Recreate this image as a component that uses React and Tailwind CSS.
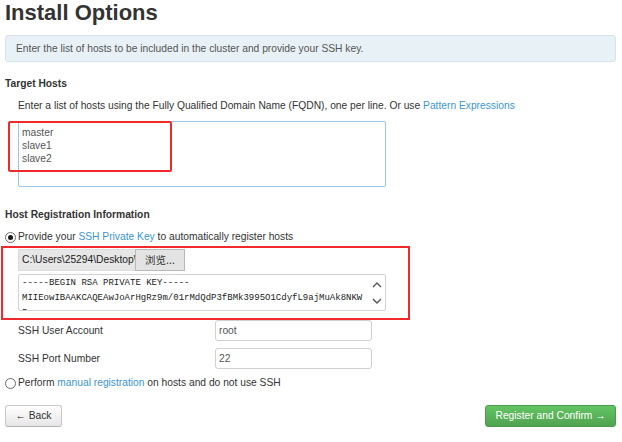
import React from "react";

function Radio({ checked }) {
  return (
    <span className="flex h-[11px] w-[11px] shrink-0 items-center justify-center rounded-full border border-[#6b6b6b] bg-white">
      {checked && <span className="h-[5px] w-[5px] rounded-full bg-[#1a1a1a]"></span>}
    </span>
  );
}

function Field({ label, value }) {
  return (
    <div className="flex items-center pl-[13px]">
      <span className="w-[197px] text-[#333]">{label}</span>
      <div className="flex h-[21px] w-[157px] items-center rounded-[3px] border border-[#d0d0d0] pl-[3px] text-[#555]">
        {value}
      </div>
    </div>
  );
}

export default function App() {
  return (
    <div className="h-[442px] w-[622px] overflow-hidden bg-white pl-[5px] pr-[6px] font-['Liberation_Sans',Arial,sans-serif] text-[10.25px] leading-[16px] text-[#333]">
      <h2 className="text-[22px] font-bold leading-[25px] text-[#333]">Install Options</h2>

      <div className="mt-[10px] flex h-[27px] items-center rounded-[3px] border border-[#d5e4ec] bg-[#e8f1f6] pl-[10px] text-[#555]">
        Enter the list of hosts to be included in the cluster and provide your SSH key.
      </div>

      <div className="mt-[14px] font-bold">Target Hosts</div>
      <div className="mt-[6px] pl-[13px]">
        Enter a list of hosts using the Fully Qualified Domain Name (FQDN), one per line. Or use{" "}
        <span className="text-[#3b95d2]">Pattern Expressions</span>
      </div>

      <div className="relative mt-[7px] ml-[13px] h-[66px] w-[368px] rounded-[2px] border border-[#9cc6ea] pl-[3px] pt-[4px] leading-[13px] text-[#555]">
        <div>master</div>
        <div>slave1</div>
        <div>slave2</div>
        <div className="absolute left-[-11px] top-[-1px] h-[51px] w-[164px] rounded-[2px] border-2 border-[#f02a2a]"></div>
      </div>

      <div className="mt-[20px] font-bold">Host Registration Information</div>
      <div className="mt-[6px] flex items-center gap-[2px]">
        <Radio checked />
        <span>
          Provide your <span className="text-[#3b95d2]">SSH Private Key</span> to automatically register hosts
        </span>
      </div>

      <div className="relative mt-[4px] ml-[13px] w-[368px]">
        <div className="flex h-[22px] w-[167px]">
          <div className="flex w-[117px] items-center overflow-hidden whitespace-nowrap border border-r-0 border-[#dcdcdc] bg-[#e6e6e6] pl-[3px] text-[#222]">
            C:\Users\25294\Desktop\
          </div>
          <div className="flex w-[50px] items-center justify-center border border-[#b9b9b9] bg-[#e3e3e3] font-['Noto_Sans_CJK_SC',sans-serif] text-[10.5px] text-[#333]">
            浏览...
          </div>
        </div>

        <div className="mt-[3px] flex h-[37px] w-[368px] overflow-hidden rounded-[2px] border border-[#d3d3d3]">
          <div className="flex-1 overflow-hidden whitespace-pre pl-[3px] pt-[1px] font-['Liberation_Mono',monospace] text-[9px] leading-[15px] text-[#222]">
            <div>-----BEGIN RSA PRIVATE KEY-----</div>
            <div>MIIEowIBAAKCAQEAwJoArHgRz9m/01rMdQdP3fBMk3995O1CdyfL9ajMuAk8NKW</div>
            <div>5</div>
          </div>
          <div className="flex w-[16px] flex-col items-center justify-center gap-[10px] text-[#555]">
            <svg width="10" height="7" viewBox="0 0 10 7" fill="none" stroke="currentColor" strokeWidth="1.4">
              <path d="M1 6l4-4 4 4" />
            </svg>
            <svg width="10" height="7" viewBox="0 0 10 7" fill="none" stroke="currentColor" strokeWidth="1.4">
              <path d="M1 1l4 4 4-4" />
            </svg>
          </div>
        </div>

        <div className="absolute left-[-17px] top-[-3px] h-[74px] w-[409px] border-2 border-[#f02a2a]"></div>
      </div>

      <div className="mt-[9px]">
        <Field label="SSH User Account" value="root" />
      </div>
      <div className="mt-[7px]">
        <Field label="SSH Port Number" value="22" />
      </div>

      <div className="mt-[6px] flex items-center gap-[2px]">
        <Radio />
        <span>
          Perform <span className="text-[#3b95d2]">manual registration</span> on hosts and do not use SSH
        </span>
      </div>

      <div className="mt-[14px] flex items-center justify-between">
        <button className="flex h-[22px] w-[57px] items-center justify-center rounded-[3px] border border-[#c8c8c8] border-b-[#b3b3b3] bg-gradient-to-b from-white to-[#e6e6e6] text-[#333]">
          ← Back
        </button>
        <button className="flex h-[22px] w-[131px] items-center justify-center rounded-[3px] border border-[#4a9b4a] bg-gradient-to-b from-[#62c462] to-[#51a351] text-white">
          Register and Confirm →
        </button>
      </div>
    </div>
  );
}
